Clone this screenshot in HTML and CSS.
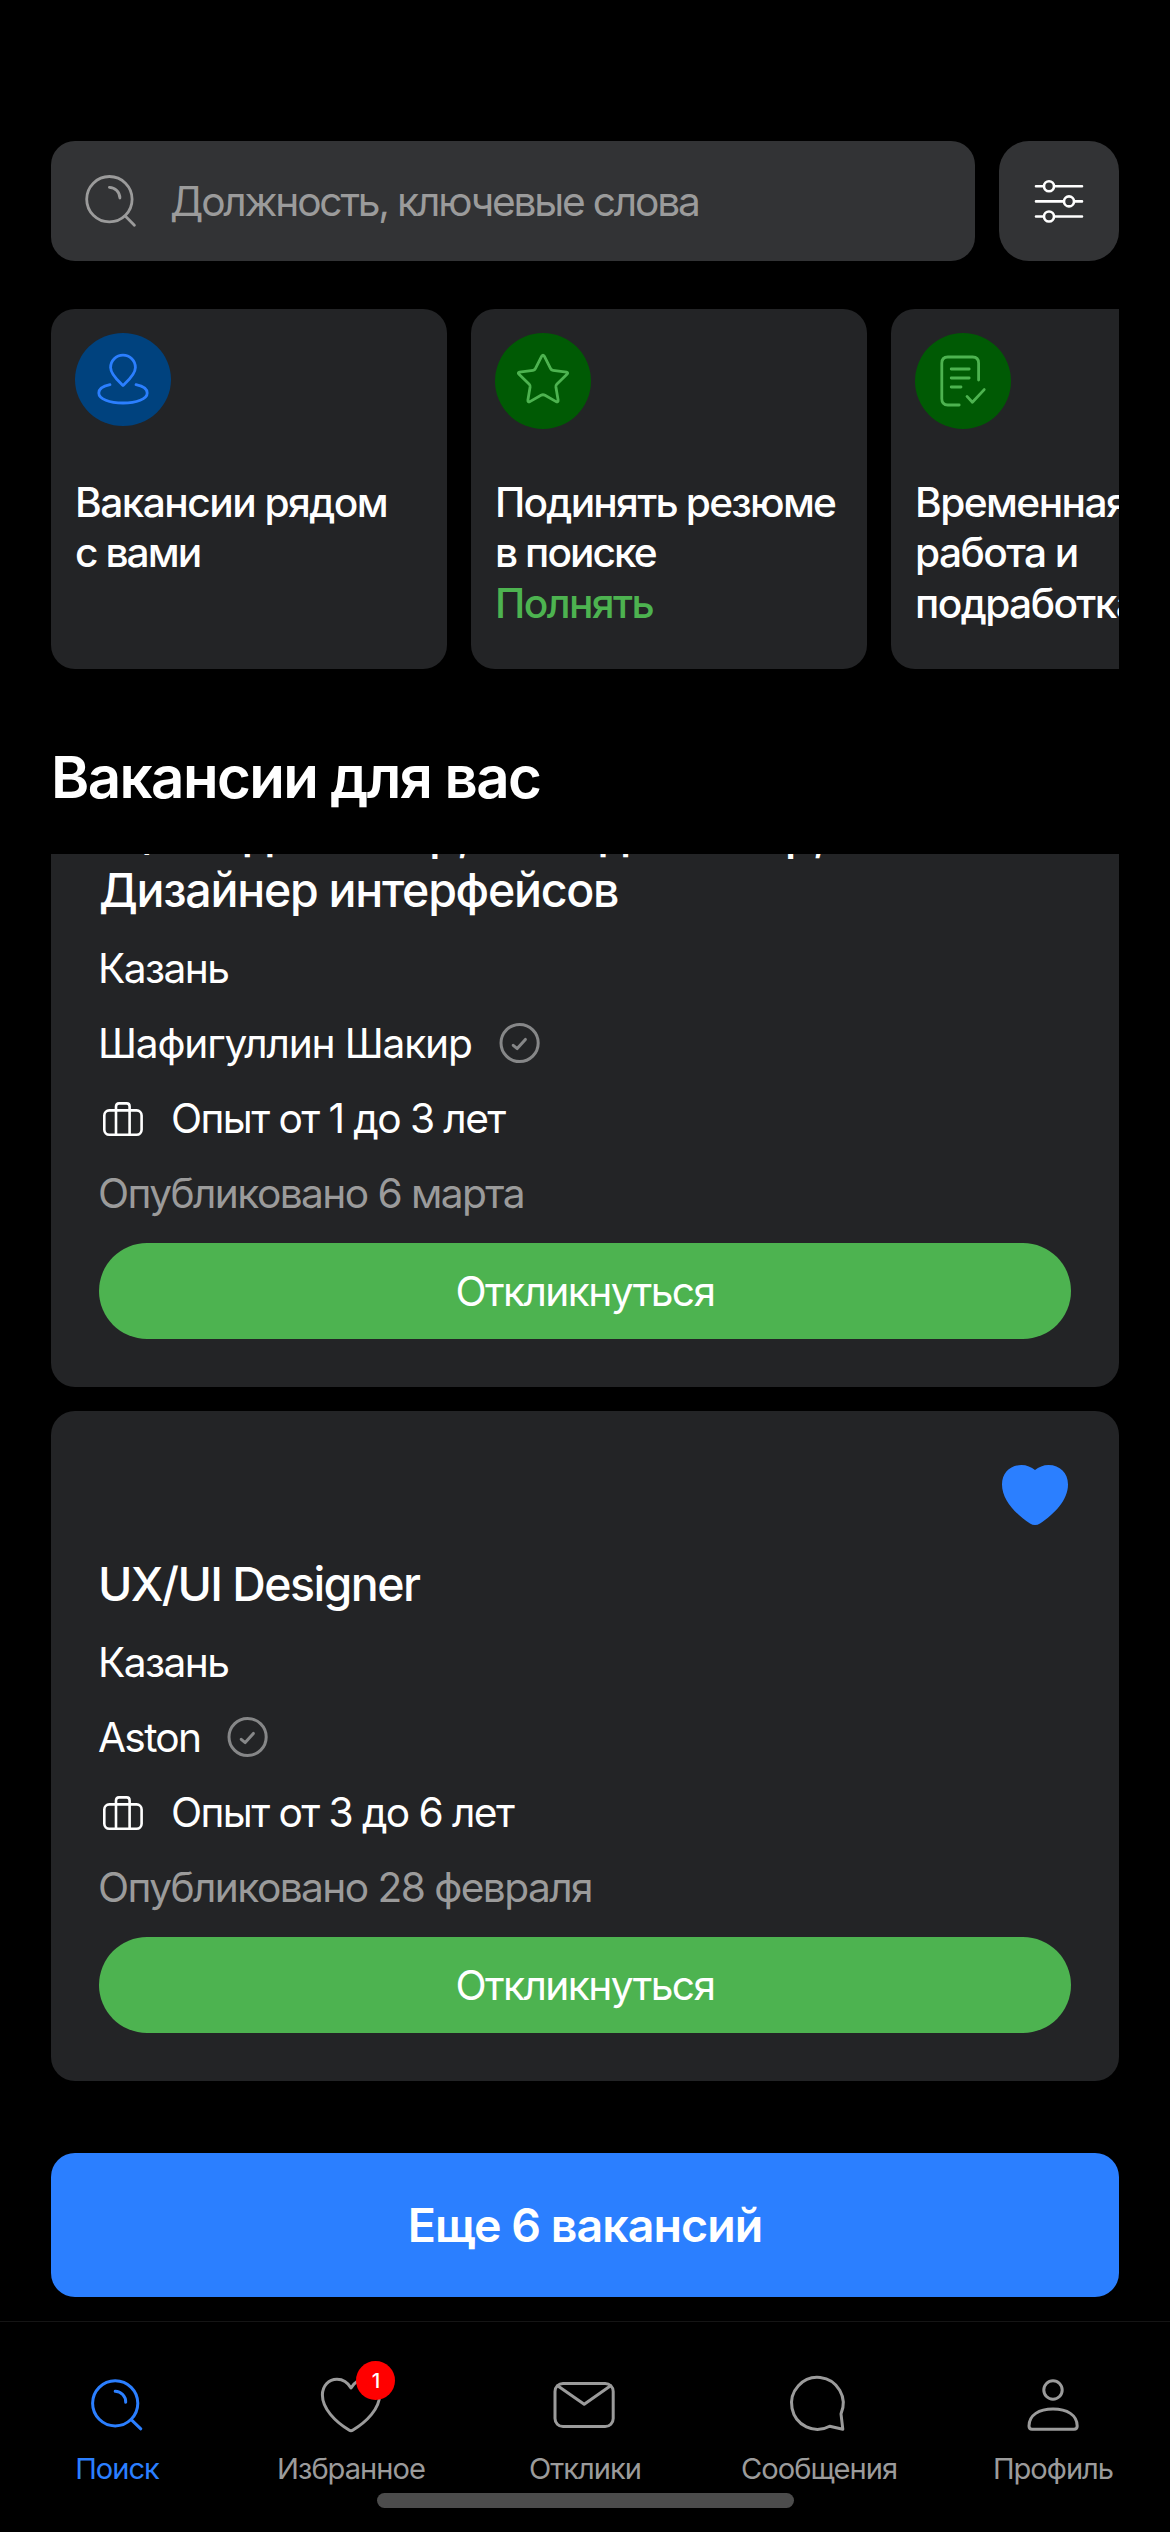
FILE: index.html
```html
<!DOCTYPE html>
<html lang="ru">
<head>
<meta charset="utf-8">
<title>Поиск вакансий</title>
<link rel="stylesheet" href="styles.css">
</head>
<body>
<svg class="sprite" aria-hidden="true">
  <symbol id="verified" viewBox="0 0 48 48">
    <circle cx="23.6" cy="24" r="18.6"/>
    <path d="M17.2 26.3 21.2 29.6 29.4 20.4"/>
  </symbol>
  <symbol id="briefcase" viewBox="0 0 48 48">
    <rect x="5.3" y="16.4" width="37.3" height="24.4" rx="5"/>
    <path d="M17 40.8V12.5Q17 9.4 20 9.4H27.6Q30.6 9.4 30.6 12.5V40.8"/>
  </symbol>
  <symbol id="heart-filled" viewBox="0 0 72 72">
    <path d="M36 11C32.5 8 27.5 6 22.5 6 11 6 3 14 3 25.5 3 41 16.5 55 31 64.5Q36 67.5 41 64.5C55.5 55 69 41 69 25.5 69 14 61 6 49.5 6 44.5 6 39.5 8 36 11Z"/>
  </symbol>
</svg>

<div class="screen">
  <main class="content">
    <header class="search">
      <div class="search-field">
        <svg class="icon-60 search-icon" viewBox="0 0 60 60"><circle cx="28.4" cy="28.2" r="22.7"/><path d="M44.5 45.2 53.4 54.2M28.4 16.4A10.8 10.8 0 0 1 38.9 27"/></svg>
        <span class="search-placeholder">Должность, ключевые слова</span>
      </div>
      <button class="filter" aria-label="Фильтры">
        <svg class="icon-60" viewBox="0 0 60 60"><path d="M7 15.3H14.5M25.5 15.3H53M7 30.4H34.5M45.5 30.4H53M7 45.5H14.5M25.5 45.5H53"/><circle cx="20" cy="15.3" r="5"/><circle cx="40" cy="30.4" r="5"/><circle cx="20" cy="45.5" r="5"/></svg>
      </button>
    </header>

    <section class="offers">
      <article class="offer">
        <div class="offer-badge">
          <svg class="offer-icon offer-icon-blue" viewBox="0 0 96 93"><path d="M48 52.6C45 49.6 35.6 42 35.6 34.6A12.4 12.4 0 0 1 60.4 34.6C60.4 42 51 49.6 48 52.6Z"/><path d="M35 51.7C28.5 53 23.8 56 23.8 60 23.8 66 34.5 70 48 70S72.2 66 72.2 60C72.2 56 67.5 53 61 51.7"/></svg>
        </div>
        <p class="offer-text"><span class="near">Вакансии рядом</span><br><span class="tight">с вами</span></p>
      </article>
      <article class="offer">
        <div class="offer-badge">
          <svg class="offer-icon offer-icon-green" viewBox="0 0 96 96"><path d="M46.7 23.2Q48 21.2 49.3 23.2L55.6 35.6Q56.3 37.1 58 37.3L71.5 39.1Q73.6 39.8 72 41.3L62 50.9Q60.7 52.3 60.9 54L63.1 67Q63.3 69.4 61.1 68.6L50 62.3Q48 61.2 46 62.3L34.9 68.6Q32.7 69.4 32.9 67L35.1 54Q35.3 52.3 34 50.9L24 41.3Q22.4 39.8 24.5 39.1L38 37.3Q39.7 37.1 40.4 35.6Z"/></svg>
        </div>
        <p class="offer-text"><span class="raise">Подинять резюме</span><br><span class="tight">в поиске</span><br><span class="offer-action">Полнять</span></p>
      </article>
      <article class="offer">
        <div class="offer-badge">
          <svg class="offer-icon offer-icon-green" viewBox="0 0 96 96"><path d="M63.6 47V30.2Q63.6 24 57.6 24H32.8Q26.8 24 26.8 30.2V65.8Q26.8 72 32.8 72H44.2M36.2 36H54.2M36.2 45H54.2M36.2 54H46M52 63.4 57.4 69.2 69.2 56.6"/></svg>
        </div>
        <p class="offer-text">Временная<br>работа и<br>подработка</p>
      </article>
    </section>

    <h1 class="title">Вакансии для вас</h1>

    <section class="vacancies">
      <article class="vacancy">
        <div class="vacancy-head"><svg class="icon-72 favorite" aria-hidden="true"><use href="#heart-filled"/></svg></div>
        <h2 class="position"><span class="position-wide">UI/UX-дизайнер, Web-дизайнер,</span><br>Дизайнер интерфейсов</h2>
        <p class="city">Казань</p>
        <p class="company"><span>Шафигуллин Шакир</span><svg class="icon-48 verified"><use href="#verified"/></svg></p>
        <p class="experience"><svg class="icon-48 briefcase"><use href="#briefcase"/></svg><span>Опыт от 1 до 3 лет</span></p>
        <p class="published">Опубликовано 6 марта</p>
        <button class="apply">Откликнуться</button>
      </article>
      <article class="vacancy">
        <div class="vacancy-head"><svg class="icon-72 favorite" aria-hidden="true"><use href="#heart-filled"/></svg></div>
        <h2 class="position position-latin">UX/UI Designer</h2>
        <p class="city">Казань</p>
        <p class="company company-latin"><span>Aston</span><svg class="icon-48 verified"><use href="#verified"/></svg></p>
        <p class="experience"><svg class="icon-48 briefcase"><use href="#briefcase"/></svg><span>Опыт от 3 до 6 лет</span></p>
        <p class="published">Опубликовано 28 февраля</p>
        <button class="apply">Откликнуться</button>
      </article>
    </section>

    <button class="more">Еще 6 вакансий</button>
  </main>

  <nav class="tabs">
    <a class="tab tab-active">
      <svg class="icon-72" viewBox="0 0 72 72"><circle cx="34.2" cy="36.3" r="22.6"/><path d="M50.2 52.6 59.8 61.8M34.2 24.2A10.8 10.8 0 0 1 44.7 35.2"/></svg>
      <span>Поиск</span>
    </a>
    <a class="tab">
      <svg class="icon-72" viewBox="0 0 72 72"><path d="M36 21C33 15.8 28.5 12.2 22 12.2 13.5 12.2 7.4 19 7.4 28 7.4 41.5 20 54.5 34 63Q36 64.3 38 63C52 54.5 64.6 41.5 64.6 28 64.6 19 58.5 12.2 50 12.2 43.5 12.2 39 15.8 36 21Z"/></svg>
      <b class="count">1</b>
      <span>Избранное</span>
    </a>
    <a class="tab">
      <svg class="icon-72" viewBox="0 0 72 72"><rect x="6" y="16.4" width="58.2" height="43.2" rx="8"/><path d="M8.6 18.8 35.2 37.2 61.6 18.8"/></svg>
      <span>Отклики</span>
    </a>
    <a class="tab">
      <svg class="icon-72" viewBox="0 0 72 72"><path d="M58 46.8A25.8 26 0 1 0 46.7 59.2L59.8 62.2Z"/></svg>
      <span>Сообщения</span>
    </a>
    <a class="tab">
      <svg class="icon-72" viewBox="0 0 72 72"><circle cx="36" cy="23" r="9.2"/><path d="M12 59C12 48 22 42 36 42S60.2 48 60.2 59Q60.2 62.2 57 62.2H15Q12 62.2 12 59Z"/></svg>
      <span>Профиль</span>
    </a>
  </nav>
  <div class="home-indicator"></div>
</div>
</body>
</html>
```
FILE: styles.css
```css
* {
  box-sizing: border-box;
  margin: 0;
  padding: 0;
}

body {
  background: #000;
  color: #fff;
  font-family: Inter, "Liberation Sans", sans-serif;
  font-size: 40.7px;
  line-height: 50px;
  letter-spacing: -0.039em;
}

button {
  border: 0;
  color: inherit;
  font: inherit;
  letter-spacing: inherit;
}

svg {
  display: block;
  flex: none;
  fill: none;
  stroke: currentColor;
  stroke-width: 3;
  stroke-linecap: round;
  stroke-linejoin: round;
}

.sprite {
  position: absolute;
  width: 0;
  height: 0;
}

.icon-48 { width: 48px; height: 48px; }
.icon-60 { width: 60px; height: 60px; }
.icon-72 { width: 72px; height: 72px; }

.screen {
  display: flex;
  flex-direction: column;
  width: 1170px;
  height: 2532px;
  overflow: hidden;
}

.content {
  display: flex;
  flex-direction: column;
  padding: 141px 51px 24px;
}

/* Search bar */

.search {
  display: flex;
  gap: 24px;
}

.search-field {
  flex: 1;
  display: flex;
  align-items: center;
  gap: 29px;
  height: 120px;
  padding-left: 30px;
  border-radius: 24px;
  background: #323335;
  color: #9b9b9b;
}

.search-placeholder {
  padding-top: 2px;
  letter-spacing: -0.054em;
}

.search-icon {
  stroke-width: 2.8;
}

.filter {
  display: flex;
  align-items: center;
  justify-content: center;
  width: 120px;
  height: 120px;
  border-radius: 30px;
  background: #323335;
}

.filter svg {
  stroke-width: 2.6;
}

/* Horizontal offers */

.offers {
  display: flex;
  gap: 24px;
  margin-top: 48px;
  overflow: hidden;
}

.offer {
  flex: none;
  width: 396px;
  height: 360px;
  padding: 24px;
  border-radius: 24px;
  background: #232426;
}

.offer-badge {
  height: 96px;
}

.offer-icon {
  width: 96px;
  border-radius: 50%;
  stroke-width: 2.8;
}

.offer-icon-blue {
  height: 93px;
  background: #00427e;
  color: #2b7fff;
}

.offer-icon-green {
  height: 96px;
  background: #005a04;
  color: #4db350;
}

.offer-text {
  margin-top: 49px;
  font-weight: 500;
  line-height: 50.3px;
  white-space: nowrap;
}

.near { letter-spacing: -0.038em; }
.raise { letter-spacing: -0.0436em; }
.tight { letter-spacing: -0.048em; }

.offer-action {
  color: #4db350;
}

/* Vacancy list */

.title {
  margin-top: 72px;
  font-size: 58.2px;
  font-weight: 600;
  line-height: 72px;
  letter-spacing: -0.0275em;
}

.vacancies {
  display: flex;
  flex-direction: column;
  justify-content: flex-end;
  gap: 24px;
  height: 1227px;
  margin-top: 41px;
  overflow: hidden;
}

.vacancy {
  display: flex;
  flex-direction: column;
  flex: none;
  gap: 25px;
  padding: 48px;
  border-radius: 24px;
  background: #232426;
}

.vacancy-head {
  display: flex;
  justify-content: flex-end;
  margin-bottom: -1px;
}

.favorite {
  color: #2b7fff;
  fill: currentColor;
  stroke: none;
}

.position,
.city,
.published,
.company span {
  margin-bottom: -1px;
  padding-top: 1px;
  text-indent: -1px;
}

.experience span {
  margin-bottom: -1px;
  padding-top: 1px;
}

.position {
  font-size: 46.5px;
  font-weight: 500;
  line-height: 57px;
  letter-spacing: -0.0274em;
  white-space: nowrap;
}

.position-wide {
  letter-spacing: -0.018em;
}

.position-latin {
  letter-spacing: -0.0338em;
}

.company,
.experience {
  display: flex;
  align-items: center;
  gap: 24px;
  height: 50px;
}

.company {
  letter-spacing: -0.0289em;
}

.company-latin {
  letter-spacing: -0.042em;
}

.verified {
  color: #868788;
}

.briefcase {
  stroke-width: 2.6;
}

.published {
  color: #9b9b9b;
}

.apply {
  height: 96px;
  padding-top: 2px;
  border-radius: 48px;
  background: #4db350;
}

.more {
  height: 144px;
  margin-top: 72px;
  border-radius: 24px;
  background: #2b7fff;
  font-size: 46.5px;
  font-weight: 600;
  line-height: 57px;
  letter-spacing: -0.0205em;
}

/* Tab bar */

.tabs {
  display: flex;
  border-top: 1px solid #151515;
  padding-top: 45px;
}

.tab {
  position: relative;
  flex: 1;
  display: flex;
  flex-direction: column;
  align-items: center;
  gap: 12px;
  color: #9b9b9b;
  font-size: 29.1px;
  line-height: 36px;
  letter-spacing: -0.034em;
}

.tab-active {
  color: #2b7fff;
}

.count {
  position: absolute;
  top: -6px;
  left: 122px;
  width: 39px;
  height: 39px;
  border-radius: 50%;
  background: #f00;
  color: #fff;
  font-size: 20.5px;
  font-weight: 500;
  line-height: 39px;
  text-align: center;
}

.home-indicator {
  align-self: center;
  width: 417px;
  height: 15px;
  margin-top: 6px;
  border-radius: 8px;
  background: #4c4c4c;
}
```
